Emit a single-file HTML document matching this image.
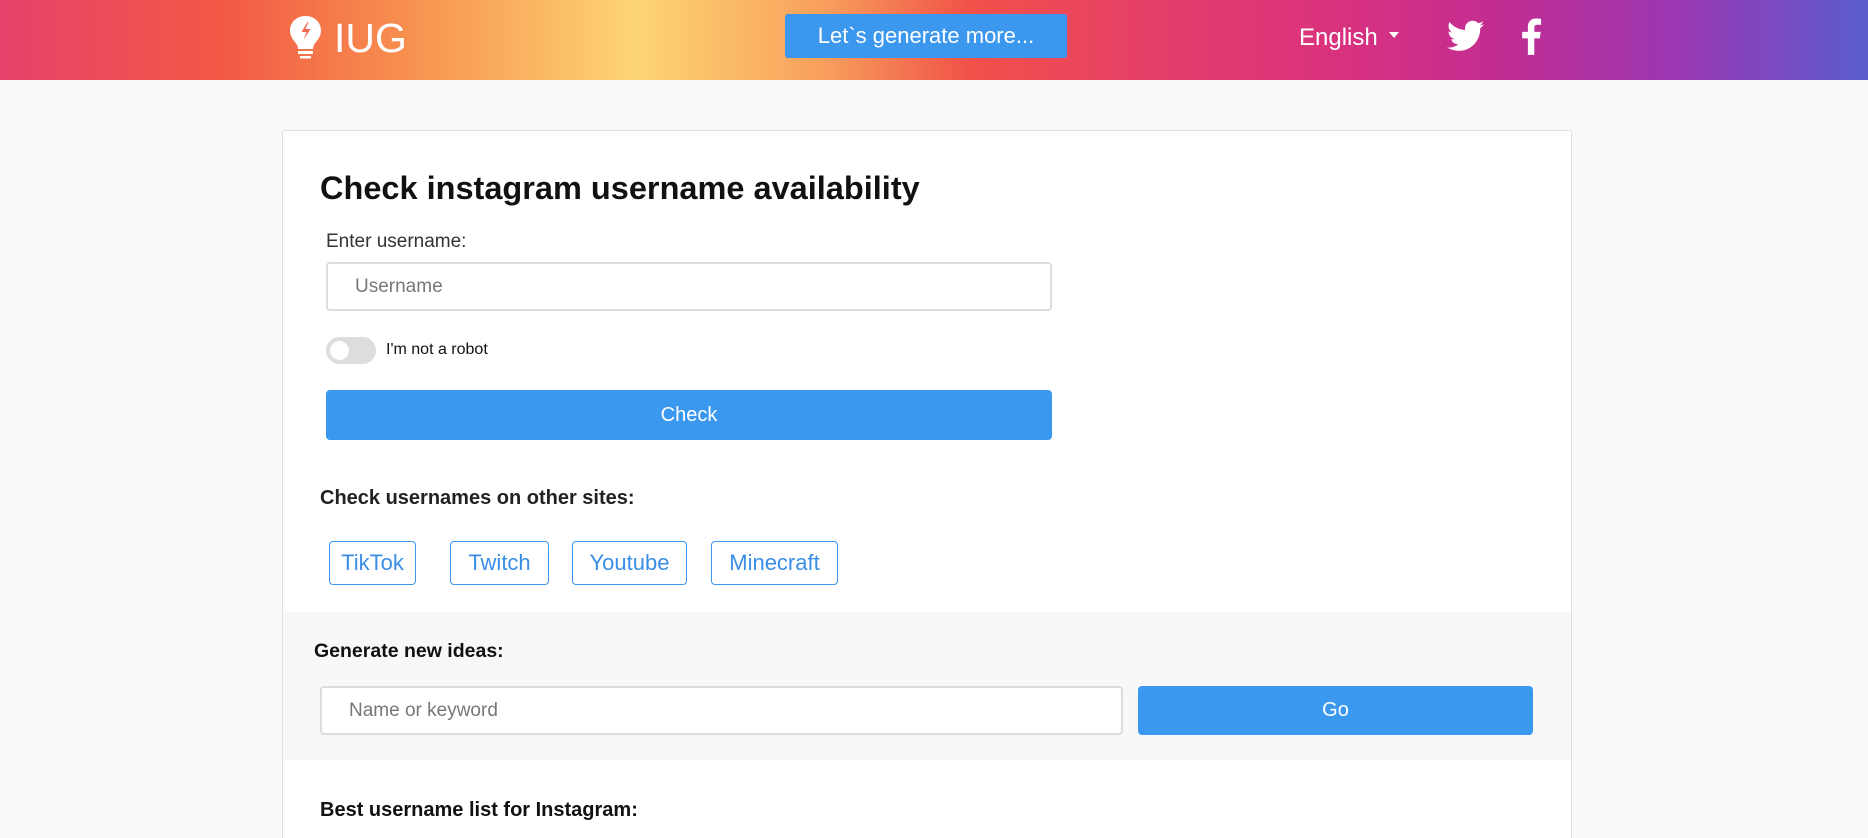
<!DOCTYPE html>
<html><head><meta charset="utf-8"><style>
*{box-sizing:border-box;margin:0;padding:0}
html{width:1868px;height:838px;overflow:hidden}
body{width:1868px;height:838px;overflow:hidden;background:#f9f9f9;font-family:"Liberation Sans",Arial,sans-serif;position:relative}
.hdr{position:absolute;left:0;top:0;width:1868px;height:80px;background:linear-gradient(90deg,#e5416a 0%,#f25a45 12%,#f7914f 22%,#fdd574 34%,#f8a05c 44%,#f05148 52%,#e43e6a 62%,#d8317f 72%,#c32d91 80%,#9a38b4 90%,#5a5ccd 100%)}
.abs{position:absolute}
.card{position:absolute;left:282px;top:130px;width:1290px;height:708px;background:#fff;border:1px solid #e0e0e0;border-bottom:none;border-radius:3px 3px 0 0}
.inp{position:absolute;border:2px solid #dcdcdc;border-radius:4px;background:#fff;color:#777;font-size:19px;display:flex;align-items:center}
.btn{position:absolute;background:#3a98ef;color:#fff;border-radius:4px;display:flex;align-items:center;justify-content:center;font-size:20px}
.site{position:absolute;top:541px;height:44px;border:1px solid #3a98ef;border-radius:4px;color:#3a8ee6;font-size:22px;display:flex;align-items:center;justify-content:center}
</style></head><body>
<div class="hdr">
<svg class="abs" style="left:288px;top:15px" width="35" height="47" viewBox="0 0 35 47">
<path d="M17.5 1C8.5 1 2 7.5 2 15.5c0 5 2.5 8.5 5 11.5 2 2.5 3 4.5 3 7h15c0-2.5 1-4.5 3-7 2.5-3 5-6.5 5-11.5C33 7.5 26.5 1 17.5 1z" fill="#fff"/>
<path d="M19.5 7l-6 10h5l-3 8 7-11h-5l3-7z" fill="#f26a4d"/>
<rect x="10" y="36" width="15" height="3" fill="#fff"/><rect x="12" y="41" width="11" height="2.5" fill="#fff"/>
</svg>
<div class="abs" style="left:334px;top:14px;font-size:41px;color:#fff;line-height:48px">IUG</div>
<div class="abs" style="left:785px;top:14px;width:282px;height:44px;background:#3b98ee;border-radius:3px;color:#fff;font-size:22px;display:flex;align-items:center;justify-content:center">Let`s generate more...</div>
<div class="abs" style="left:1299px;top:24px;font-size:24px;color:#fff">English</div>
<div class="abs" style="left:1389px;top:32px;width:0;height:0;border-left:5px solid transparent;border-right:5px solid transparent;border-top:6px solid #fff"></div>
<svg class="abs" style="left:1447px;top:19px" width="37" height="34" viewBox="0 0 24 20"><path fill="#fff" d="M24 2.4c-.9.4-1.8.6-2.8.8 1-.6 1.8-1.6 2.2-2.7-1 .6-2 1-3.1 1.2C19.3.7 18 .1 16.6.1c-2.7 0-4.9 2.2-4.9 4.9 0 .4 0 .8.1 1.1C7.7 5.9 4.1 4 1.7 1 1.2 1.7 1 2.6 1 3.5c0 1.7.9 3.2 2.2 4.1-.8 0-1.6-.2-2.2-.6v.1c0 2.4 1.7 4.4 3.9 4.8-.4.1-.8.2-1.3.2-.3 0-.6 0-.9-.1.6 2 2.4 3.4 4.6 3.4-1.7 1.3-3.8 2.1-6.1 2.1-.4 0-.8 0-1.2-.1 2.2 1.4 4.8 2.2 7.5 2.2 9.1 0 14-7.5 14-14v-.6c1-.7 1.8-1.6 2.5-2.6z"/></svg>
<svg class="abs" style="left:1520px;top:18px" width="22" height="37" viewBox="0 0 12 20"><path fill="#fff" d="M7.8 20v-9h3l.5-3.5H7.8V5.3c0-1 .3-1.7 1.8-1.7h1.9V.4C11.1.3 10 .2 8.8.2 6.1.2 4.3 1.8 4.3 4.8v2.7H1.2V11h3.1v9z"/></svg>
</div>
<div class="card"></div>
<div class="abs" style="left:320px;top:170px;font-size:32.5px;font-weight:bold;color:#111">Check instagram username availability</div>
<div class="abs" style="left:326px;top:231px;font-size:19px;color:#333">Enter username:</div>
<div class="inp" style="left:326px;top:262px;width:726px;height:49px;padding-left:27px">Username</div>
<div class="abs" style="left:326px;top:337px;width:50px;height:27px;border-radius:14px;background:#ddd"></div>
<div class="abs" style="left:330px;top:341px;width:19px;height:19px;border-radius:50%;background:#fff"></div>
<div class="abs" style="left:386px;top:341px;font-size:16px;color:#111">I'm not a robot</div>
<div class="btn" style="left:326px;top:390px;width:726px;height:50px">Check</div>
<div class="abs" style="left:320px;top:487px;font-size:20px;font-weight:bold;color:#222">Check usernames on other sites:</div>
<div class="site" style="left:329px;width:87px">TikTok</div>
<div class="site" style="left:450px;width:99px">Twitch</div>
<div class="site" style="left:572px;width:115px">Youtube</div>
<div class="site" style="left:711px;width:127px">Minecraft</div>
<div class="abs" style="left:283px;top:612px;width:1288px;height:148px;background:#f8f8f8"></div>
<div class="abs" style="left:314px;top:640px;font-size:19.5px;font-weight:bold;color:#111">Generate new ideas:</div>
<div class="inp" style="left:320px;top:686px;width:803px;height:49px;padding-left:27px">Name or keyword</div>
<div class="btn" style="left:1138px;top:686px;width:395px;height:49px">Go</div>
<div class="abs" style="left:320px;top:799px;font-size:20px;font-weight:bold;color:#111">Best username list for Instagram:</div>
</body></html>
